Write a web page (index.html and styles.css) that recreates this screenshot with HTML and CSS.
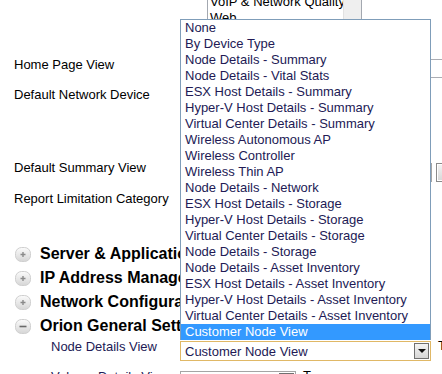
FILE: index.html
```html
<!DOCTYPE html>
<html>
<head>
    <title>Web Console Settings</title>
    <link rel="stylesheet" href="styles.css">
</head>
<body>
    <div class="page">
        <div class="row row-top">
            <div class="lbl"></div>
            <div class="ctl">
                <div class="listbox">
                    <div class="opts">
                        <div class="opt">VoIP &amp; Network Quality</div>
                        <div class="opt">Web</div>
                    </div>
                    <div class="scroll"></div>
                </div>
            </div>
        </div>
        <div class="row row-home">
            <div class="lbl">Home Page View</div>
            <div class="ctl"><div class="input"></div></div>
        </div>
        <div class="row row-device">
            <div class="lbl">Default Network Device</div>
            <div class="ctl"></div>
        </div>
        <div class="row row-summary">
            <div class="lbl">Default Summary View</div>
            <div class="ctl">
                <div class="sel sel-wide"></div>
                <div class="mini"><span class="mini-mark"></span></div>
            </div>
        </div>
        <div class="row row-report">
            <div class="lbl">Report Limitation Category</div>
            <div class="ctl"></div>
        </div>

        <div class="sec">
            <svg class="toggle" width="16" height="15" viewBox="0 0 16 15">
                <defs>
                    <linearGradient id="tg" x1="0" y1="0" x2="0" y2="1">
                        <stop offset="0" stop-color="#fbfbfb"/>
                        <stop offset="1" stop-color="#d6d6d6"/>
                    </linearGradient>
                </defs>
                <rect x="0.5" y="0.5" width="15" height="14" rx="6" fill="url(#tg)" stroke="#cfcfcf"/>
                <path d="M5.5 7.5h5M8 5v5" stroke="#8a8a8a" stroke-width="1.4"/>
            </svg>
            <span>Server &amp; Application Monitor Settings</span>
        </div>
        <div class="sec">
            <svg class="toggle" width="16" height="15" viewBox="0 0 16 15">
                <rect x="0.5" y="0.5" width="15" height="14" rx="6" fill="url(#tg)" stroke="#cfcfcf"/>
                <path d="M5.5 7.5h5M8 5v5" stroke="#8a8a8a" stroke-width="1.4"/>
            </svg>
            <span>IP Address Manager Settings</span>
        </div>
        <div class="sec">
            <svg class="toggle" width="16" height="15" viewBox="0 0 16 15">
                <rect x="0.5" y="0.5" width="15" height="14" rx="6" fill="url(#tg)" stroke="#cfcfcf"/>
                <path d="M5.5 7.5h5M8 5v5" stroke="#8a8a8a" stroke-width="1.4"/>
            </svg>
            <span>Network Configuration Manager Settings</span>
        </div>
        <div class="sec">
            <svg class="toggle" width="16" height="15" viewBox="0 0 16 15">
                <rect x="0.5" y="0.5" width="15" height="14" rx="6" fill="url(#tg)" stroke="#cfcfcf"/>
                <path d="M4.5 7.5h7" stroke="#6a6a6a" stroke-width="1.6"/>
            </svg>
            <span>Orion General Settings</span>
        </div>

        <div class="row row-node sub">
            <div class="lbl">Node Details View</div>
            <div class="ctl">
                <div class="sel sel-focus">
                    <span>Customer Node View</span>
                    <span class="btn"><span class="arrow"></span></span>
                </div>
                <span class="tail">T</span>
            </div>
        </div>
        <div class="row row-volume sub">
            <div class="lbl">Volume Details View</div>
            <div class="ctl">
                <div class="sel sel-small">
                    <span></span>
                    <span class="btn"><span class="arrow"></span></span>
                </div>
                <span class="tail">T</span>
            </div>
        </div>
    </div>

    <!-- open list of the Node Details View select -->
    <div class="dropdown">
        <div class="item">None</div>
        <div class="item">By Device Type</div>
        <div class="item">Node Details - Summary</div>
        <div class="item">Node Details - Vital Stats</div>
        <div class="item">ESX Host Details - Summary</div>
        <div class="item">Hyper-V Host Details - Summary</div>
        <div class="item">Virtual Center Details - Summary</div>
        <div class="item">Wireless Autonomous AP</div>
        <div class="item">Wireless Controller</div>
        <div class="item">Wireless Thin AP</div>
        <div class="item">Node Details - Network</div>
        <div class="item">ESX Host Details - Storage</div>
        <div class="item">Hyper-V Host Details - Storage</div>
        <div class="item">Virtual Center Details - Storage</div>
        <div class="item">Node Details - Storage</div>
        <div class="item">Node Details - Asset Inventory</div>
        <div class="item">ESX Host Details - Asset Inventory</div>
        <div class="item">Hyper-V Host Details - Asset Inventory</div>
        <div class="item">Virtual Center Details - Asset Inventory</div>
        <div class="item selected">Customer Node View</div>
    </div>
</body>
</html>
```
FILE: styles.css
```css
body {
    margin: 0;
    background: #fff;
    font-family: 'Liberation Sans', Arial, sans-serif;
    font-size: 13px;
    color: #000;
    overflow: hidden;
}
.page {
    padding-left: 14px;
}
.row {
    display: flex;
    align-items: flex-start;
}
.lbl {
    width: 166px;
    flex: none;
    box-sizing: border-box;
    line-height: 16px;
    white-space: nowrap;
}
.ctl {
    flex: 1;
    min-width: 0;
    display: flex;
    align-items: flex-start;
    white-space: nowrap;
}
.row-top { height: 57px; }
.row-home { height: 30px; }
.row-device { height: 73px; }
.row-summary { height: 31px; }
.row-report { height: 51px; }
.row-node { height: 30px; }
.row-volume { height: 30px; }

.listbox {
    display: flex;
    flex: none;
    width: 155px;
    height: 70px;
    margin: -7px 0 0 27px;
    border: 1px solid #a3a8b0;
    box-sizing: border-box;
    overflow: hidden;
}
.opts {
    flex: 1;
    padding-left: 2px;
    overflow: hidden;
}
.opt {
    line-height: 16px;
    white-space: nowrap;
}
.scroll {
    width: 17px;
    background: #efefef;
    border-left: 1px solid #e2e2e2;
}
.input {
    flex: none;
    width: 300px;
    height: 19px;
    margin-top: 2px;
    border: 1px solid #abadb3;
    box-sizing: border-box;
}
.sel {
    flex: none;
    display: flex;
    align-items: center;
    box-sizing: border-box;
    height: 20px;
    padding-left: 4px;
    border: 1px solid #a5a5a5;
    background: #fff;
    color: #221a55;
}
.sel-wide {
    width: 252px;
    height: 19px;
    margin-top: 3px;
}
.mini {
    flex: none;
    width: 20px;
    height: 19px;
    margin: 3px 0 0 4px;
    box-sizing: border-box;
    border: 1px solid #8a8a8a;
    padding: 1px;
}
.mini-mark {
    display: block;
    height: 100%;
    background: linear-gradient(#f2f2f2, #d9d9d9);
}
.sel-focus {
    width: 251px;
    margin-top: 3px;
    border-color: #e0b866;
}
.sel-small {
    width: 116px;
    margin-top: 3px;
}
.btn {
    margin-left: auto;
    margin-right: 1px;
    width: 15px;
    height: 16px;
    box-sizing: border-box;
    border: 1px solid #707070;
    background: linear-gradient(#f4f4f4, #d6d6d6);
    display: flex;
    align-items: center;
    justify-content: center;
}
.arrow {
    width: 0;
    height: 0;
    border-left: 4px solid transparent;
    border-right: 4px solid transparent;
    border-top: 4px solid #111;
}
.tail {
    margin-left: 7px;
    line-height: 16px;
}
.sub .lbl {
    padding: 1px 0 0 37px;
    color: #221a55;
}
.sec {
    display: flex;
    align-items: center;
    gap: 9px;
    height: 24px;
    padding-left: 1px;
    font-size: 16px;
    font-weight: bold;
    white-space: nowrap;
}
.toggle {
    flex: none;
}
.dropdown {
    position: absolute;
    left: 180px;
    top: 19px;
    width: 251px;
    box-sizing: border-box;
    background: #fff;
    border: 1px solid #7f9db9;
    border-bottom: none;
}
.item {
    height: 16px;
    line-height: 16px;
    padding-left: 4px;
    color: #221a55;
    white-space: nowrap;
    overflow: hidden;
}
.item.selected {
    background: #3399ff;
    color: #fff;
}
```
